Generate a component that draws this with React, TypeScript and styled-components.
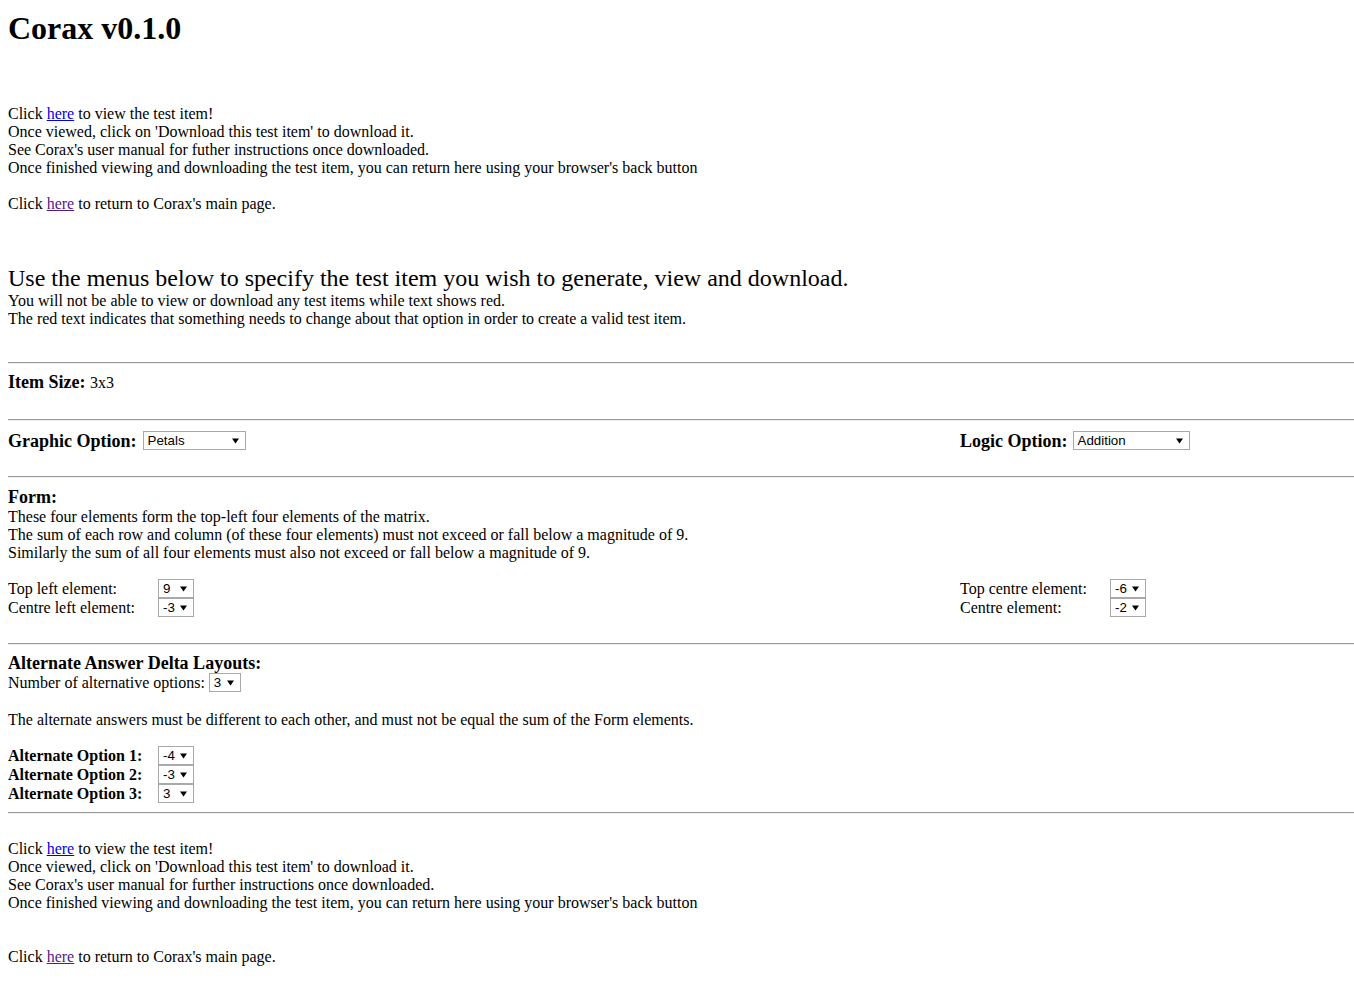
import React from "react";
import styled, { createGlobalStyle } from "styled-components";

const Global = createGlobalStyle`
  html, body { background: #fff; }
  body {
    margin: 8px 0 8px 8px;
    font-family: "Liberation Serif", "Times New Roman", serif;
    font-size: 16px;
    line-height: 18px;
    color: #000;
  }
`;

const Page = styled.div`
  display: flex;
  flex-direction: column;
`;

const Title = styled.h1`
  margin: 2px 0 0 0;
  font-size: 32px;
  line-height: 37px;
  font-weight: bold;
`;

const Block = styled.div<{ $top: number }>`
  margin-top: ${(p) => p.$top}px;
`;

const Line = styled.div<{ $h?: number }>`
  min-height: ${(p) => p.$h ?? 18}px;
  line-height: ${(p) => p.$h ?? 18}px;
`;

const Link = styled.a<{ $visited?: boolean }>`
  color: ${(p) => (p.$visited ? "#551a8b" : "#0000ee")};
  text-decoration: underline;
  cursor: pointer;
`;

const Lead = styled.div`
  font-size: 24px;
  line-height: 28px;
`;

const Rule = styled.hr<{ $top: number }>`
  box-sizing: border-box;
  width: 100%;
  margin: ${(p) => p.$top}px 0 0 0;
  height: 0;
  border: 0;
  border-top: 1px solid #9a9a9a;
  border-bottom: 1px solid #eeeeee;
`;

const Heading = styled.b`
  font-weight: bold;
  font-size: 18px;
  white-space: pre;
`;

const TwoCol = styled.div<{ $top: number }>`
  margin-top: ${(p) => p.$top}px;
  display: grid;
  grid-template-columns: 952px 1fr;
`;

const Inline = styled.div`
  display: flex;
  align-items: center;
  height: 19px;
  white-space: pre;
`;

const FieldGrid = styled.div`
  display: grid;
  grid-template-columns: 150px auto;
  justify-content: start;
  grid-auto-rows: 19px;
  align-items: center;
`;

const SelectBox = styled.span<{ $w: number; $gap?: number }>`
  display: inline-flex;
  align-items: center;
  justify-content: space-between;
  box-sizing: border-box;
  width: ${(p) => p.$w}px;
  height: 19px;
  margin-left: ${(p) => p.$gap ?? 0}px;
  border: 1px solid #a9a9a9;
  background: #fff;
  padding: 0 6px 0 4px;
  font-family: "Liberation Sans", Arial, sans-serif;
  font-size: 13.33px;
  line-height: 17px;
  color: #000;
`;

const Arrow = styled.svg`
  width: 7px;
  height: 6px;
  flex: none;
`;

function Select({ value, w, gap }: { value: string; w: number; gap?: number }) {
  return (
    <SelectBox $w={w} $gap={gap} role="combobox">
      <span>{value}</span>
      <Arrow viewBox="0 0 7 6">
        <path d="M0 0.5 L7 0.5 L3.5 5.5 Z" fill="#000" />
      </Arrow>
    </SelectBox>
  );
}

const FieldLabel = styled.span<{ $bold?: boolean }>`
  font-weight: ${(p) => (p.$bold ? "bold" : "normal")};
`;

export default function App() {
  return (
    <Page>
      <Global />
      <Title>Corax v0.1.0</Title>

      <Block $top={58}>
        <Line>
          Click <Link>here</Link> to view the test item!
        </Line>
        <Line>Once viewed, click on 'Download this test item' to download it.</Line>
        <Line>See Corax's user manual for futher instructions once downloaded.</Line>
        <Line>
          Once finished viewing and downloading the test item, you can return here using your browser's back button
        </Line>
        <Line />
        <Line>
          Click <Link $visited>here</Link> to return to Corax's main page.
        </Line>
      </Block>

      <Block $top={51}>
        <Lead>Use the menus below to specify the test item you wish to generate, view and download.</Lead>
        <Line>You will not be able to view or download any test items while text shows red.</Line>
        <Line>The red text indicates that something needs to change about that option in order to create a valid test item.</Line>
      </Block>

      <Rule $top={34} />
      <Block $top={8}>
        <Line $h={20}>
          <Heading>Item Size: </Heading>3x3
        </Line>
      </Block>

      <Rule $top={26} />
      <TwoCol $top={10}>
        <Inline>
          <Heading>Graphic Option:</Heading>
          <Select value="Petals" w={103} gap={6} />
        </Inline>
        <Inline>
          <Heading>Logic Option:</Heading>
          <Select value="Addition" w={117} gap={5} />
        </Inline>
      </TwoCol>

      <Rule $top={26} />
      <Block $top={9}>
        <Line $h={20}>
          <Heading>Form:</Heading>
        </Line>
        <Line>These four elements form the top-left four elements of the matrix.</Line>
        <Line>The sum of each row and column (of these four elements) must not exceed or fall below a magnitude of 9.</Line>
        <Line>Similarly the sum of all four elements must also not exceed or fall below a magnitude of 9.</Line>
      </Block>
      <TwoCol $top={17}>
        <FieldGrid>
          <FieldLabel>Top left element:</FieldLabel>
          <Select value="9" w={36} />
          <FieldLabel>Centre left element:</FieldLabel>
          <Select value="-3" w={36} />
        </FieldGrid>
        <FieldGrid>
          <FieldLabel>Top centre element:</FieldLabel>
          <Select value="-6" w={36} />
          <FieldLabel>Centre element:</FieldLabel>
          <Select value="-2" w={36} />
        </FieldGrid>
      </TwoCol>

      <Rule $top={26} />
      <Block $top={9}>
        <Line $h={19}>
          <Heading>Alternate Answer Delta Layouts:</Heading>
        </Line>
        <Inline>
          Number of alternative options: <Select value="3" w={32} />
        </Inline>
        <Block $top={19}>
          <Line>The alternate answers must be different to each other, and must not be equal the sum of the Form elements.</Line>
        </Block>
        <Block $top={17}>
          <FieldGrid>
            <FieldLabel $bold>Alternate Option 1:</FieldLabel>
            <Select value="-4" w={36} />
            <FieldLabel $bold>Alternate Option 2:</FieldLabel>
            <Select value="-3" w={36} />
            <FieldLabel $bold>Alternate Option 3:</FieldLabel>
            <Select value="3" w={36} />
          </FieldGrid>
        </Block>
      </Block>

      <Rule $top={9} />
      <Block $top={26}>
        <Line>
          Click <Link>here</Link> to view the test item!
        </Line>
        <Line>Once viewed, click on 'Download this test item' to download it.</Line>
        <Line>See Corax's user manual for further instructions once downloaded.</Line>
        <Line>
          Once finished viewing and downloading the test item, you can return here using your browser's back button
        </Line>
        <Line />
        <Line />
        <Line>
          Click <Link $visited>here</Link> to return to Corax's main page.
        </Line>
      </Block>
    </Page>
  );
}
